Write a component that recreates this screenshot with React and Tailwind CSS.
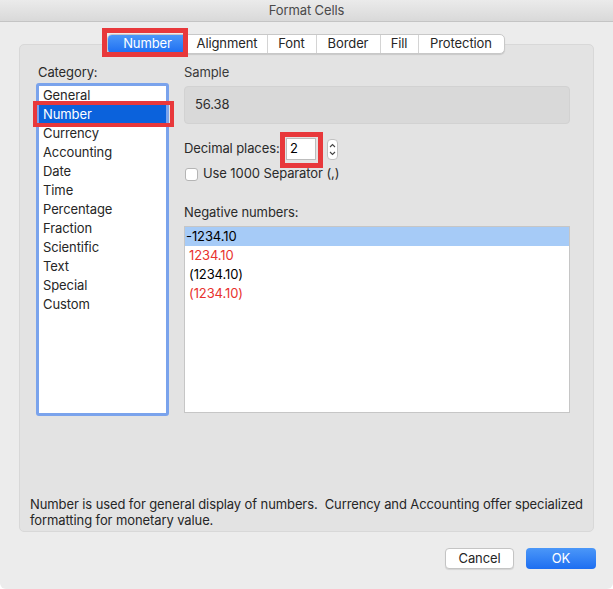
import React from 'react';

const tabs = [
  { label: 'Number', w: 'w-[80px]' },
  { label: 'Alignment', w: 'w-[79px]' },
  { label: 'Font', w: 'w-[49px]' },
  { label: 'Border', w: 'w-[64px]' },
  { label: 'Fill', w: 'w-[38px]' },
  { label: 'Protection', w: 'w-[86px]' },
];

const categories = [
  'General', 'Number', 'Currency', 'Accounting', 'Date', 'Time',
  'Percentage', 'Fraction', 'Scientific', 'Text', 'Special', 'Custom',
];

const negatives = [
  { text: '-1234.10', red: false, selected: true },
  { text: '1234.10', red: true },
  { text: '(1234.10)', red: false },
  { text: '(1234.10)', red: true },
];

export default function App() {
  return (
    <div className="w-[613px] h-[589px] bg-[#ececec] flex flex-col text-[13px] tracking-[-0.1px] text-[#262626] overflow-hidden rounded-b-[6px] font-['Inter','Liberation_Sans',sans-serif]">
      {/* Title bar */}
      <div className="h-[22px] shrink-0 flex items-center justify-center bg-gradient-to-b from-[#ebebeb] to-[#d9d9d9] border-b border-[#c4c4c4] text-[#4a4a4a]">
        Format Cells
      </div>

      <div className="flex flex-col px-[19px] pt-[12px]">
        {/* Tabs */}
        <div className="relative z-10 self-center ml-[-2px] flex h-[20px] rounded-[5px] bg-white border border-[#c8c8c8] shadow-[0_1px_1px_rgba(0,0,0,0.12)]">
          {tabs.map((t, i) =>
            i === 0 ? (
              <div key={t.label} className={`${t.w} relative flex items-center justify-center text-white bg-gradient-to-b from-[#4b97f8] to-[#1d6ef1] rounded-l-[4px]`}>
                {t.label}
                <div className="absolute left-[-6px] top-[-7px] w-[86px] h-[29px] border-[5px] border-[#e8383b]" />
              </div>
            ) : (
              <div key={t.label} className={`${t.w} flex items-center justify-center ${i > 1 ? 'border-l border-[#d4d4d4]' : ''}`}>
                {t.label}
              </div>
            )
          )}
        </div>

        {/* Panel */}
        <div className="mt-[-10px] h-[488px] rounded-[5px] bg-[#e3e3e3] border border-[#d8d8d8] flex flex-col pl-[16px] pr-[23px] pt-[19px] pb-[3px]">
          <div className="flex gap-[15px]">
            {/* Category */}
            <div className="w-[133px] flex flex-col">
              <div className="h-[16px] leading-[16px] ml-[2px] text-[#2a2a2a]">Category:</div>
              <div className="mt-[3px] h-[333px] rounded-[3px] border-[3px] border-[#7aa3ec] bg-white relative">
                {categories.map((c, i) => (
                  <div
                    key={c}
                    className={`h-[19px] leading-[19px] pl-[4px] ${i === 1 ? 'bg-[#0b62dc] text-white' : 'text-[#262626]'}`}
                  >
                    {c}
                  </div>
                ))}
                <div className="absolute left-[-6px] top-[15px] w-[141px] h-[26px] border-[4px] border-[#e8383b]" />
              </div>
            </div>

            {/* Right column */}
            <div className="w-[386px] flex flex-col">
              <div className="h-[16px] leading-[16px] text-[#3a3a3a]">Sample</div>
              <div className="mt-[6px] h-[38px] rounded-[4px] bg-[#d9d9d9] border border-[#d2d2d2] flex items-center pl-[10px] text-[#2e2e2e]">
                56.38
              </div>

              <div className="mt-[14px] flex items-center h-[22px]">
                <span className="w-[102px] whitespace-nowrap text-[#2a2a2a]">Decimal places:</span>
                <div className="relative w-[30px] h-[22px] bg-white border border-[#bdbdbd] flex items-center pl-[3px] text-black">
                  2
                  <div className="absolute left-[-7px] top-[-7px] w-[43px] h-[36px] border-[5px] border-[#e8383b]" />
                </div>
                <div className="ml-[11px] w-[11px] h-[21px] rounded-[4px] bg-white border border-[#c2c2c2] flex flex-col items-center justify-center">
                  <svg width="7" height="15" viewBox="0 0 7 15" fill="none" stroke="#444" strokeWidth="1.1">
                    <path d="M1 5 L3.5 2.5 L6 5" />
                    <path d="M1 10 L3.5 12.5 L6 10" />
                  </svg>
                </div>
              </div>

              <div className="mt-[7px] flex items-center h-[14px]">
                <div className="w-[13px] h-[13px] rounded-[3px] bg-white border border-[#b5b5b5] ml-[1px]" />
                <span className="ml-[5px] text-[#2a2a2a]">Use 1000 Separator (,)</span>
              </div>

              <div className="mt-[23px] h-[16px] leading-[16px] text-[#2a2a2a]">Negative numbers:</div>
              <div className="mt-[6px] h-[187px] bg-white border border-[#c6c6c6]">
                {negatives.map((n, i) => (
                  <div
                    key={i}
                    className={`h-[19px] leading-[19px] ${n.selected ? 'bg-[#a6cbf7] pl-[1px]' : 'pl-[4px]'} ${n.red ? 'text-[#e8322e]' : 'text-black'}`}
                  >
                    {n.text}
                  </div>
                ))}
              </div>
            </div>
          </div>

          <p className="mt-auto ml-[-6px] mr-[-20px] leading-[16px] text-[#262626]">
            Number is used for general display of numbers.&nbsp; Currency and Accounting offer specialized formatting for monetary value.
          </p>
        </div>

        {/* Buttons */}
        <div className="mt-[16px] flex justify-end gap-[12px] mr-[-2px]">
          <button className="w-[69px] h-[21px] rounded-[4px] bg-white border border-[#c4c4c4] shadow-[0_1px_1px_rgba(0,0,0,0.1)] text-[#262626]">
            Cancel
          </button>
          <button className="w-[70px] h-[21px] rounded-[4px] bg-gradient-to-b from-[#4b97f8] to-[#1d6ef1] text-white">
            OK
          </button>
        </div>
      </div>
    </div>
  );
}
